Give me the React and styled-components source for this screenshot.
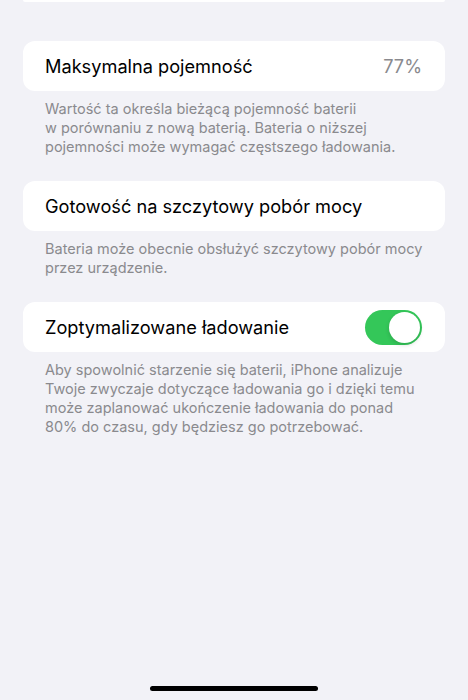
import React, { useState } from 'react';
import styled, { createGlobalStyle } from 'styled-components';

const GlobalStyle = createGlobalStyle`
  html, body {
    margin: 0;
    padding: 0;
    background: #f2f2f7;
  }
  body {
    font-family: Inter, "Noto Sans", "Liberation Sans", sans-serif;
    -webkit-font-smoothing: antialiased;
  }
`;

const sections = [
  {
    label: 'Maksymalna pojemność',
    value: '77%',
    footer: 'Wartość ta określa bieżącą pojemność baterii\nw porównaniu z nową baterią. Bateria o niższej\npojemności może wymagać częstszego ładowania.',
  },
  {
    label: 'Gotowość na szczytowy pobór mocy',
    footer: 'Bateria może obecnie obsłużyć szczytowy pobór mocy\nprzez urządzenie.',
  },
  {
    label: 'Zoptymalizowane ładowanie',
    toggle: true,
    footer: 'Aby spowolnić starzenie się baterii, iPhone analizuje\nTwoje zwyczaje dotyczące ładowania go i dzięki temu\nmoże zaplanować ukończenie ładowania do ponad\n80% do czasu, gdy będziesz go potrzebować.',
  },
];

function App() {
  const [optimized, setOptimized] = useState(true);

  return (
    <Screen>
      <GlobalStyle />
      <TopCard />
      <List>
        {sections.map((s) => (
          <Section key={s.label}>
            <Card>
              <Label>{s.label}</Label>
              {s.value && <Value>{s.value}</Value>}
              {s.toggle && (
                <Toggle $on={optimized} onClick={() => setOptimized(!optimized)}>
                  <Knob $on={optimized} />
                </Toggle>
              )}
            </Card>
            <Footer>{s.footer}</Footer>
          </Section>
        ))}
      </List>
      <HomeBar />
    </Screen>
  );
}

export default App;

const Screen = styled.div`
  width: 468px;
  height: 700px;
  padding: 0 23px;
  box-sizing: border-box;
  display: flex;
  flex-direction: column;
  overflow: hidden;
  background: #f2f2f7;
`;

const TopCard = styled.div`
  height: 2px;
  background: #fff;
  border-radius: 0 0 12px 12px;
  flex-shrink: 0;
`;

const List = styled.div`
  display: flex;
  flex-direction: column;
  gap: 25px;
  margin-top: 39px;
  flex: 1;
`;

const Section = styled.div`
  display: flex;
  flex-direction: column;
`;

const Card = styled.div`
  height: 50px;
  background: #fff;
  border-radius: 12px;
  display: flex;
  align-items: center;
  justify-content: space-between;
  padding: 0 23px 0 22px;
`;

const Label = styled.span`
  font-size: 18.2px;
  color: #000;
`;

const Value = styled.span`
  font-size: 18.2px;
  color: #8a8a8e;
`;

const Toggle = styled.button`
  width: 57px;
  height: 35px;
  border: none;
  padding: 2px;
  border-radius: 18px;
  background: ${(p) => (p.$on ? '#34c759' : '#e9e9eb')};
  display: flex;
  justify-content: ${(p) => (p.$on ? 'flex-end' : 'flex-start')};
  cursor: pointer;
`;

const Knob = styled.span`
  width: 31px;
  height: 31px;
  border-radius: 50%;
  background: #fff;
  box-shadow: 0 2px 4px rgba(0, 0, 0, 0.15);
`;

const Footer = styled.div`
  padding: 8px 22px 0;
  font-size: 14.5px;
  line-height: 19px;
  color: #8a8a8e;
  white-space: pre-line;
`;

const HomeBar = styled.div`
  align-self: center;
  width: 168px;
  height: 5px;
  border-radius: 3px;
  background: #000;
  margin-bottom: 9px;
  flex-shrink: 0;
`;
